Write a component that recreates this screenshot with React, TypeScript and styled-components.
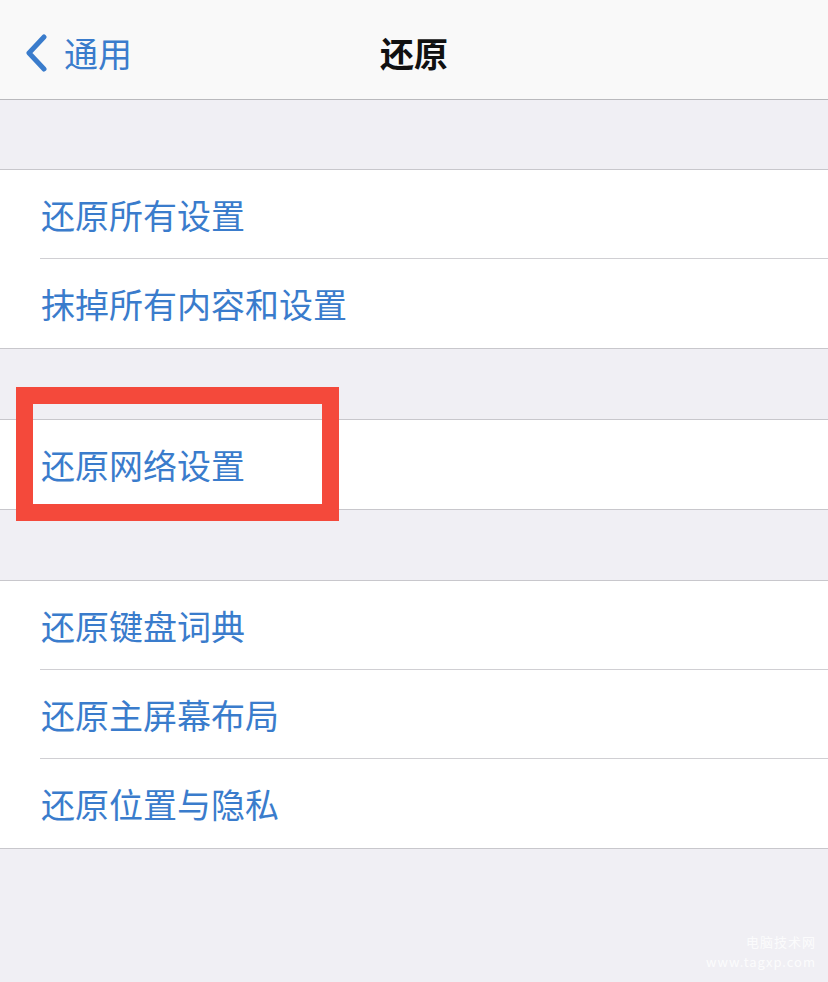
import React from "react"
import styled, { createGlobalStyle } from "styled-components"

const GlobalStyle = createGlobalStyle`
  html, body {
    margin: 0;
    padding: 0;
    background: #f0eff4;
  }
  body {
    font-family: "Noto Sans CJK SC", "Noto Sans", sans-serif;
  }
`

const Page = styled.div`
  position: relative;
  width: 828px;
  min-height: 982px;
  background: #f0eff4;
  overflow: hidden;
`

const NavBar = styled.div`
  height: 100px;
  box-sizing: border-box;
  padding-top: 6px;
  background: #f9f9f9;
  border-bottom: 1px solid #b9b9bd;
  display: grid;
  grid-template-columns: 1fr auto 1fr;
  align-items: center;
`

const BackButton = styled.div`
  display: flex;
  align-items: center;
  gap: 16px;
  padding-left: 24px;
  color: #3a7ccc;
  font-size: 34px;
  line-height: 1;
`

const NavTitle = styled.div`
  font-size: 34px;
  font-weight: 700;
  color: #111;
  line-height: 1;
`

const Gap = styled.div<{ $first?: boolean }>`
  height: ${(p) => (p.$first ? "69px" : "70px")};
`

const Group = styled.div`
  background: #fff;
  border-top: 1px solid #c8c7cc;
  border-bottom: 1px solid #c8c7cc;
`

const Row = styled.div`
  padding-left: 40px;
  height: 89px;
`

const RowInner = styled.div<{ $last?: boolean }>`
  height: 100%;
  box-sizing: border-box;
  display: flex;
  align-items: center;
  border-bottom: ${(p) => (p.$last ? "none" : "1px solid #d0cfd3")};
  color: #3a7ccc;
  font-size: 34px;
  padding-left: 1px;
`

const Highlight = styled.div`
  position: absolute;
  left: 16px;
  top: 387px;
  width: 323px;
  height: 134px;
  box-sizing: border-box;
  border: 17px solid #f4493b;
`

const Watermark = styled.div`
  position: absolute;
  right: 12px;
  bottom: 10px;
  text-align: right;
  color: rgba(255, 255, 255, 0.8);
  font-size: 13px;
  line-height: 20px;
  letter-spacing: 1px;
`

const groups = [
  ["还原所有设置", "抹掉所有内容和设置"],
  ["还原网络设置"],
  ["还原键盘词典", "还原主屏幕布局", "还原位置与隐私"],
]

const Chevron = () => (
  <svg width="24" height="38" viewBox="0 0 24 38">
    <path
      d="M20 3 L5 19 L20 35"
      fill="none"
      stroke="#3a7ccc"
      strokeWidth="5"
      strokeLinecap="round"
      strokeLinejoin="round"
    />
  </svg>
)

const App: React.FC = () => {
  return (
    <>
      <GlobalStyle />
      <Page>
        <NavBar>
          <BackButton>
            <Chevron />
            <span>通用</span>
          </BackButton>
          <NavTitle>还原</NavTitle>
          <div />
        </NavBar>
        {groups.map((items, gi) => (
          <React.Fragment key={gi}>
            <Gap $first={gi === 0} />
            <Group>
              {items.map((label, i) => (
                <Row key={label}>
                  <RowInner $last={i === items.length - 1}>{label}</RowInner>
                </Row>
              ))}
            </Group>
          </React.Fragment>
        ))}
        <Highlight />
        <Watermark>
          <div>电脑技术网</div>
          <div>www.tagxp.com</div>
        </Watermark>
      </Page>
    </>
  )
}

export default App
